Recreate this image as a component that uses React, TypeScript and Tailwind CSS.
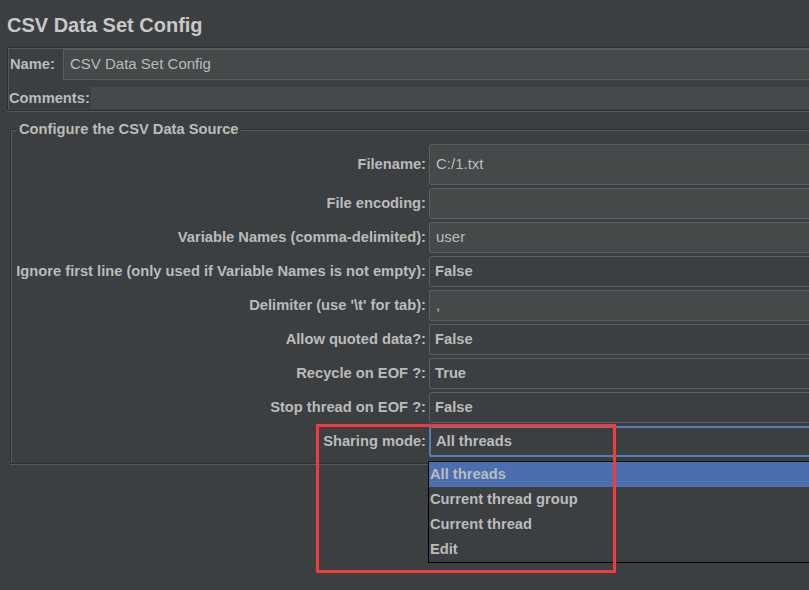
import React from 'react';

const rows: { label: string; value: string; kind: 'text' | 'combo' | 'focus' }[] = [
  { label: 'File encoding:', value: '', kind: 'text' },
  { label: 'Variable Names (comma-delimited):', value: 'user', kind: 'text' },
  { label: 'Ignore first line (only used if Variable Names is not empty):', value: 'False', kind: 'combo' },
  { label: "Delimiter (use '\\t' for tab):", value: ',', kind: 'text' },
  { label: 'Allow quoted data?:', value: 'False', kind: 'combo' },
  { label: 'Recycle on EOF ?:', value: 'True', kind: 'combo' },
  { label: 'Stop thread on EOF ?:', value: 'False', kind: 'combo' },
  { label: 'Sharing mode:', value: 'All threads', kind: 'focus' },
];

const options = ['All threads', 'Current thread group', 'Current thread', 'Edit'];

function Field({ value, kind, tall }: { value: string; kind: 'text' | 'combo' | 'focus'; tall?: boolean }) {
  const base = 'flex-1 flex items-center rounded-[2px]';
  if (kind === 'text') {
    return (
      <div className={`${base} ${tall ? 'h-[41px]' : 'h-[31px]'} pl-[6px] bg-[#45494a] border border-[#5b5e60] font-normal text-[15px]`}>
        {value}
      </div>
    );
  }
  if (kind === 'focus') {
    return (
      <div className={`${base} h-[31px] border-2 border-[#4f7fb5] pl-[5px] font-bold`}>
        {value}
      </div>
    );
  }
  return (
    <div className={`${base} h-[31px] border border-[#5b5e60] pl-[5px] font-bold`}>
      {value}
    </div>
  );
}

export default function App() {
  return (
    <div className="relative w-[809px] h-[590px] overflow-hidden bg-[#3c3f41] text-[#bbbbbb] font-['Liberation_Sans',Arial,sans-serif] text-[14.7px]">
      <div className="w-[840px]">
        {/* Title */}
        <h1 className="h-[47px] pl-[7px] pt-[12px] text-[20px] font-bold leading-[26px] text-[#c8c8c8]">
          CSV Data Set Config
        </h1>

        {/* Name / Comments */}
        <div className="ml-[7px] h-[64px] border-t border-l border-b border-[#2e3032] shadow-[inset_1px_1px_0_#55595b] pt-[1px] pl-[1px]">
          <div className="flex items-center h-[31px]">
            <span className="w-[54px] pl-[1px] font-bold">Name:</span>
            <div className="flex-1 h-[31px] flex items-center pl-[6px] bg-[#45494a] border border-[#5b5e60] border-r-0 font-normal text-[15px]">
              CSV Data Set Config
            </div>
          </div>
          <div className="flex items-center h-[22px] mt-[7px]">
            <span className="w-[82px] font-bold">Comments:</span>
            <div className="flex-1 h-[22px] bg-[#45494a]" />
          </div>
        </div>
        <div className="ml-[7px] h-[1px] bg-[#55595b]" />

        {/* CSV data source group */}
        <div className="relative ml-[10px] mt-[17px] h-[335px] border-t border-l border-b border-[#2e3032] shadow-[inset_1px_1px_0_#55595b,0_1px_0_#55595b]">
          <span className="absolute -top-[10px] left-[6px] px-[2px] bg-[#3c3f41] font-bold leading-[18px]">
            Configure the CSV Data Source
          </span>
          <div className="pt-[14px] flex flex-col gap-[3px]">
            <div className="flex items-center">
              <span className="w-[418px] pr-[3px] text-right font-bold">Filename:</span>
              <Field value="C:/1.txt" kind="text" tall />
            </div>
            {rows.map((r) => (
              <div key={r.label} className="flex items-center">
                <span className="w-[418px] pr-[3px] text-right font-bold whitespace-nowrap">{r.label}</span>
                <Field value={r.value} kind={r.kind} />
              </div>
            ))}
          </div>
        </div>
      </div>

      {/* Open dropdown list */}
      <div className="absolute left-[428px] top-[461px] w-[400px] h-[102px] border border-black bg-[#3c3f41] font-bold">
        {options.map((o, i) => (
          <div
            key={o}
            className={`h-[25px] flex items-center pl-[1px] ${i === 0 ? 'bg-[#4b6eaf]' : ''}`}
          >
            {o}
          </div>
        ))}
      </div>

      {/* Red highlight box */}
      <div className="absolute left-[316px] top-[424px] w-[300px] h-[149px] border-[3px] border-[#f33a3a]" />
    </div>
  );
}
